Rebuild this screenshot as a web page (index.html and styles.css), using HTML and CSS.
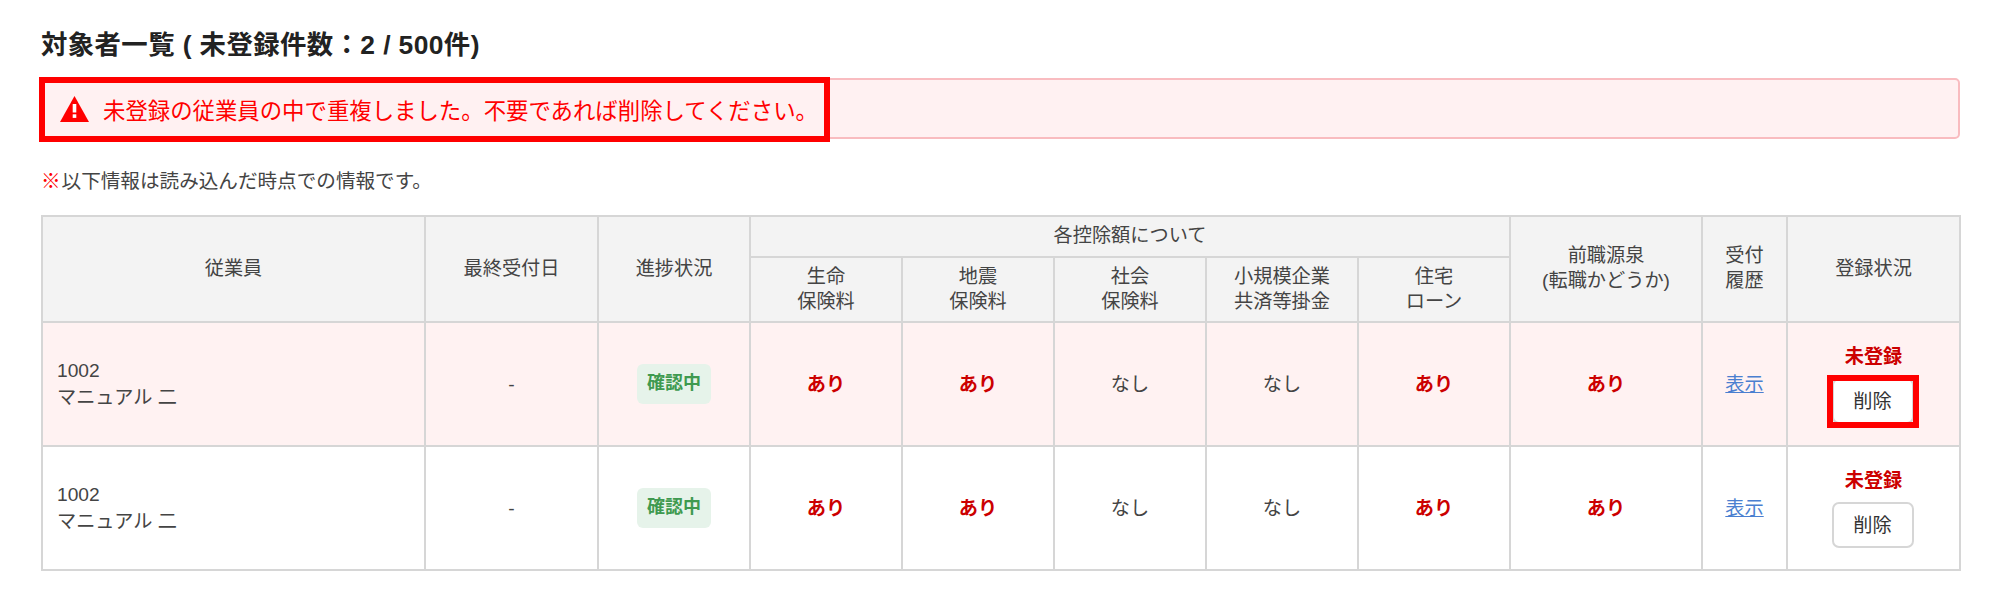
FILE: index.html
```html
<!DOCTYPE html>
<html lang="ja">
<head>
<meta charset="utf-8">
<title>対象者一覧</title>
<link rel="stylesheet" href="styles.css">
</head>
<body>
<main class="page">
  <h2 class="title">対象者一覧 ( 未登録件数：2 / 500件)</h2>
  <div class="alert">
    <svg class="alert-icon" viewBox="0 0 29 26" aria-hidden="true">
      <path d="M14.5 0 29 26H0Z" fill="#ff0000"/>
      <rect x="12.7" y="8" width="3.6" height="8.5" fill="#fff"/>
      <rect x="12.7" y="18.3" width="3.6" height="3.6" fill="#fff"/>
    </svg>
    <span>未登録の従業員の中で重複しました。不要であれば削除してください。</span>
    <div class="alert-mark"></div>
  </div>
  <p class="note"><span class="note-mark">※</span>以下情報は読み込んだ時点での情報です。</p>
  <table class="list">
    <colgroup>
      <col class="c-emp"><col class="c-date"><col class="c-std"><col class="c-std"><col class="c-std"><col class="c-std"><col class="c-std"><col class="c-std"><col class="c-prev"><col class="c-hist"><col class="c-date">
    </colgroup>
    <thead>
      <tr class="head-a">
        <th rowspan="2">従業員</th>
        <th rowspan="2">最終受付日</th>
        <th rowspan="2">進捗状況</th>
        <th colspan="5">各控除額について</th>
        <th rowspan="2">前職源泉<br>(転職かどうか)</th>
        <th rowspan="2">受付<br>履歴</th>
        <th rowspan="2">登録状況</th>
      </tr>
      <tr class="head-b">
        <th>生命<br>保険料</th>
        <th>地震<br>保険料</th>
        <th>社会<br>保険料</th>
        <th>小規模企業<br>共済等掛金</th>
        <th>住宅<br>ローン</th>
      </tr>
    </thead>
    <tbody>
      <tr class="row dup">
        <td class="emp">1002<br>マニュアル 二</td>
        <td>-</td>
        <td><span class="badge">確認中</span></td>
        <td class="yes">あり</td>
        <td class="yes">あり</td>
        <td>なし</td>
        <td>なし</td>
        <td class="yes">あり</td>
        <td class="yes">あり</td>
        <td><a class="link" href="#">表示</a></td>
        <td>
          <div class="status">未登録</div>
          <div class="btn-wrap"><button class="btn" type="button">削除</button><div class="btn-mark"></div></div>
        </td>
      </tr>
      <tr class="row">
        <td class="emp">1002<br>マニュアル 二</td>
        <td>-</td>
        <td><span class="badge">確認中</span></td>
        <td class="yes">あり</td>
        <td class="yes">あり</td>
        <td>なし</td>
        <td>なし</td>
        <td class="yes">あり</td>
        <td class="yes">あり</td>
        <td><a class="link" href="#">表示</a></td>
        <td>
          <div class="status">未登録</div>
          <div class="btn-wrap"><button class="btn" type="button">削除</button></div>
        </td>
      </tr>
    </tbody>
  </table>
</main>
</body>
</html>
```
FILE: styles.css
```css
* { box-sizing: border-box; }
html, body { margin: 0; background: #fff; }
body {
  font-family: "Liberation Sans", "Noto Sans CJK JP", sans-serif;
  color: #444;
  font-size: 19.2px;
}
.page { padding: 28px 40px 0 41px; }
.title {
  margin: 0;
  font-size: 26.4px;
  line-height: 34px;
  font-weight: 700;
  color: #222;
  letter-spacing: 0.4px;
}
.alert {
  position: relative;
  display: flex;
  align-items: center;
  gap: 14px;
  height: 61px;
  margin-top: 16px;
  padding-left: 17px;
  background: #fff1f2;
  border: 2px solid #f9bcc0;
  border-radius: 5px;
  color: #ff0000;
  font-size: 22.4px;
}
.alert-icon { width: 29px; height: 26px; flex: none; }
.alert-mark {
  position: absolute;
  left: -4px;
  top: -3px;
  width: 791px;
  height: 65px;
  border: 6px solid #ff0000;
}
.note {
  margin: 29px 0 0;
  font-size: 19.6px;
  line-height: 26px;
  color: #444;
}
.note-mark { color: #ff0000; font-weight: 700; margin-right: 1px; }
.list {
  width: 1919px;
  margin-top: 21px;
  border-collapse: collapse;
  table-layout: fixed;
}
.c-emp { width: 383px; }
.c-date { width: 173px; }
.c-std { width: 152px; }
.c-prev { width: 192px; }
.c-hist { width: 85px; }
.list th, .list td {
  border: 2px solid #d6d6d6;
  padding: 0;
  text-align: center;
  vertical-align: middle;
  font-weight: 400;
  line-height: 25px;
}
.list th { background: #f3f3f3; color: #444; padding-bottom: 2px; }
.head-a { height: 41px; }
.head-b { height: 65px; }
.row { height: 124px; }
.dup td { background: #fff2f2; }
.list td.emp { text-align: left; padding-left: 14px; line-height: 27px; }
.list td.yes { color: #cc0000; font-weight: 700; }
.badge {
  display: inline-block;
  width: 74px;
  height: 40px;
  line-height: 38px;
  border-radius: 6px;
  background: #e6f3ea;
  color: #3f9a50;
  font-size: 18px;
  font-weight: 700;
}
.link { color: #4a7fd0; text-decoration: underline; }
.status { color: #cc0000; font-weight: 700; line-height: 26px; }
.btn-wrap { position: relative; width: 82px; height: 46px; margin: 8px auto 0; left: -1px; }
.btn {
  width: 82px;
  height: 46px;
  padding: 0;
  background: #fff;
  border: 2px solid #d6d6d6;
  border-radius: 7px;
  color: #333;
  font: inherit;
  cursor: pointer;
}
.btn-mark {
  position: absolute;
  left: -5px;
  top: -3px;
  width: 92px;
  height: 53px;
  border: 6px solid #ff0000;
}
```
